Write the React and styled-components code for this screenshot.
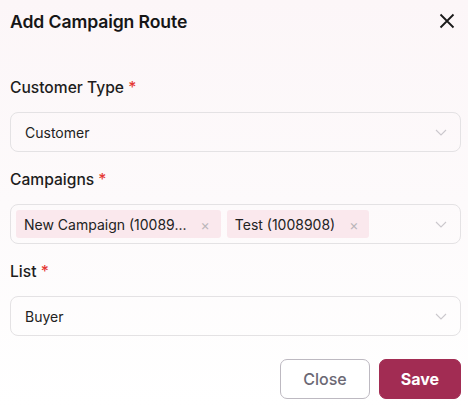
import React from 'react';
import styled, { createGlobalStyle } from 'styled-components';

const GlobalStyle = createGlobalStyle`
  html, body {
    margin: 0;
    padding: 0;
  }
  body {
    font-family: Inter, "Noto Sans", sans-serif;
    color: #1f1f1f;
    background: #ffffff;
  }
`;

function Chevron() {
  return (
    <svg width="14" height="14" viewBox="0 0 14 14" fill="none">
      <path d="M2 5l5 5 5-5" stroke="#cbc8cd" strokeWidth="1.1" />
    </svg>
  );
}

function CloseIcon() {
  return (
    <svg width="16" height="16" viewBox="0 0 16 16" fill="none">
      <path d="M1.5 1.5l13 13M14.5 1.5l-13 13" stroke="#1a1a1a" strokeWidth="1.8" />
    </svg>
  );
}

const fields = [
  { label: 'Customer Type', value: 'Customer' },
  { label: 'Campaigns', tags: ['New Campaign (10089...', 'Test (1008908)'] },
  { label: 'List', value: 'Buyer' },
];

export default function App() {
  return (
    <>
      <GlobalStyle />
      <Modal.Wrapper>
        <Modal.Header>
          <Modal.Title>Add Campaign Route</Modal.Title>
          <Modal.Close>
            <CloseIcon />
          </Modal.Close>
        </Modal.Header>
        <Modal.Body>
          {fields.map((f) => (
            <Field.Group key={f.label}>
              <Field.Label>
                {f.label} <Field.Star>*</Field.Star>
              </Field.Label>
              <Field.Select $tags={!!f.tags}>
                {f.tags ? (
                  <Field.Tags>
                    {f.tags.map((t) => (
                      <Field.Tag key={t}>
                        {t}
                        <Field.TagX>×</Field.TagX>
                      </Field.Tag>
                    ))}
                  </Field.Tags>
                ) : (
                  <Field.Value>{f.value}</Field.Value>
                )}
                <Chevron />
              </Field.Select>
            </Field.Group>
          ))}
        </Modal.Body>
        <Modal.Footer>
          <Button>Close</Button>
          <Button $primary>Save</Button>
        </Modal.Footer>
      </Modal.Wrapper>
    </>
  );
}

const Modal = {
  Wrapper: styled.div`
    width: 468px;
    height: 407px;
    box-sizing: border-box;
    padding: 0 7px 0 10px;
    background: linear-gradient(180deg, #fcf6f8 0%, #fdfafb 50%, #ffffff 100%);
    display: flex;
    flex-direction: column;
  `,
  Header: styled.div`
    height: 40px;
    display: flex;
    align-items: center;
    justify-content: space-between;
    padding-top: 1px;
  `,
  Title: styled.h2`
    margin: 0;
    font-size: 17.6px;
    font-weight: 600;
    color: #161616;
    letter-spacing: -0.1px;
  `,
  Close: styled.span`
    display: flex;
    margin-right: 6px;
  `,
  Body: styled.div`
    padding-top: 37px;
    display: flex;
    flex-direction: column;
    gap: 18px;
  `,
  Footer: styled.div`
    margin-top: 23px;
    display: flex;
    justify-content: flex-end;
    gap: 9px;
  `,
};

const Field = {
  Group: styled.div`
    display: flex;
    flex-direction: column;
    gap: 15px;
  `,
  Label: styled.label`
    font-size: 15.6px;
    font-weight: 500;
    color: #1d1d1d;
    line-height: 19px;
  `,
  Star: styled.span`
    color: #e53935;
  `,
  Select: styled.div`
    height: 40px;
    box-sizing: border-box;
    border: 1px solid #e4e2e4;
    border-radius: 8px;
    display: flex;
    align-items: center;
    justify-content: space-between;
    padding: ${(p) => (p.$tags ? '0 12px 0 5px' : '0 12px 0 14px')};
  `,
  Value: styled.span`
    font-size: 14px;
    color: #222;
  `,
  Tags: styled.div`
    display: flex;
    gap: 6px;
  `,
  Tag: styled.span`
    height: 28px;
    display: flex;
    align-items: center;
    gap: 14px;
    padding: 0 11px 0 8px;
    background: #fae8ed;
    border-radius: 3px;
    font-size: 14px;
    color: #222;
  `,
  TagX: styled.span`
    color: #b9b5b9;
    font-size: 14px;
  `,
};

const Button = styled.button`
  height: 40px;
  padding: 0 ${(p) => (p.$primary ? '21px' : '22px')};
  min-width: ${(p) => (p.$primary ? '82px' : '89px')};
  border-radius: 7px;
  font-family: Inter, "Noto Sans", sans-serif;
  font-size: 16px;
  font-weight: ${(p) => (p.$primary ? 700 : 500)};
  color: ${(p) => (p.$primary ? '#ffffff' : '#6b6874')};
  background: ${(p) => (p.$primary ? '#a22c53' : '#ffffff')};
  border: 1px solid ${(p) => (p.$primary ? '#a22c53' : '#bdb9c1')};
  cursor: pointer;
`;
